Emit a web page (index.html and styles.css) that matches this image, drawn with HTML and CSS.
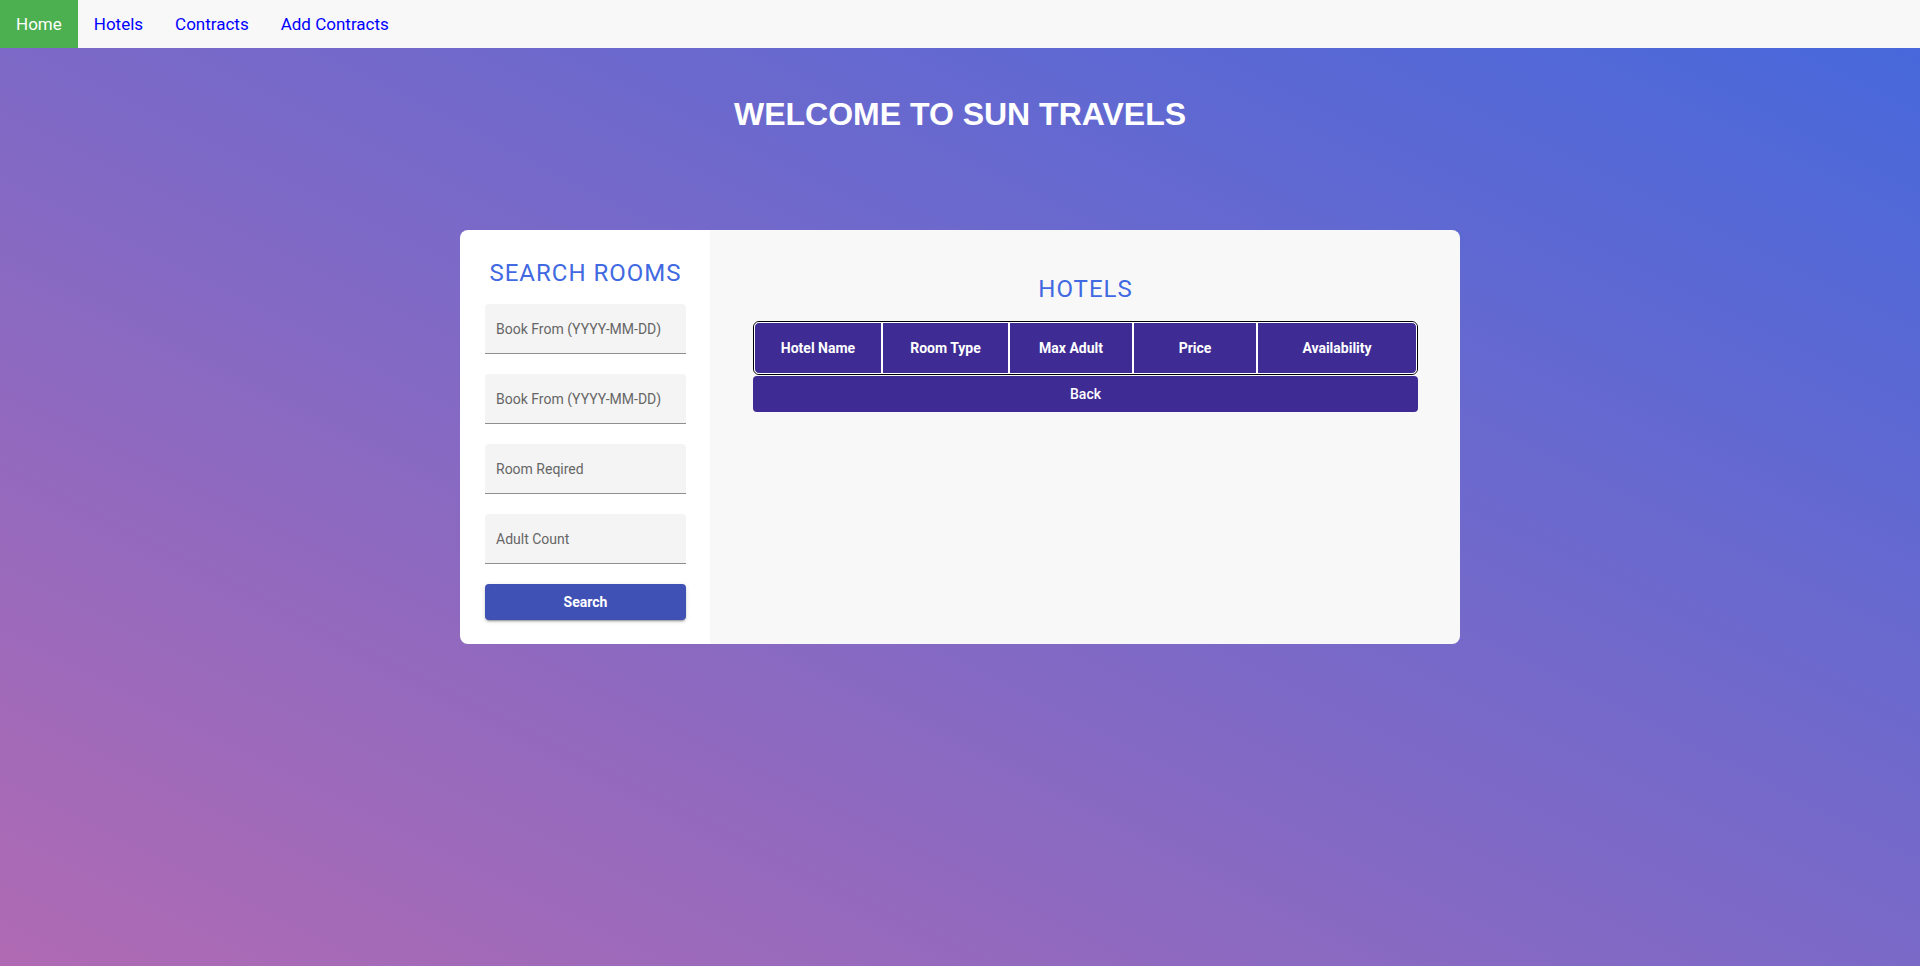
FILE: index.html
```html
<!DOCTYPE html>
<html lang="en">
<head>
<meta charset="utf-8">
<title>Sun Travels</title>
<link rel="stylesheet" href="styles.css">
</head>
<body>
<nav class="topnav">
  <a class="nav-link active" href="#">Home</a>
  <a class="nav-link" href="#">Hotels</a>
  <a class="nav-link" href="#">Contracts</a>
  <a class="nav-link" href="#">Add Contracts</a>
</nav>
<main class="page">
  <h1 class="welcome">WELCOME TO SUN TRAVELS</h1>
  <section class="card">
    <aside class="search-panel">
      <h2 class="panel-title">SEARCH ROOMS</h2>
      <div class="field"><input class="field-input" type="text" placeholder="Book From (YYYY-MM-DD)"></div>
      <div class="field"><input class="field-input" type="text" placeholder="Book From (YYYY-MM-DD)"></div>
      <div class="field"><input class="field-input" type="text" placeholder="Room Reqired"></div>
      <div class="field"><input class="field-input" type="text" placeholder="Adult Count"></div>
      <button class="search-btn" type="button">Search</button>
    </aside>
    <div class="results-panel">
      <h2 class="panel-title">HOTELS</h2>
      <table class="hotel-table">
        <thead>
          <tr>
            <th class="col-name">Hotel Name</th>
            <th class="col-type">Room Type</th>
            <th class="col-adult">Max Adult</th>
            <th class="col-price">Price</th>
            <th class="col-avail">Availability</th>
          </tr>
        </thead>
      </table>
      <button class="back-btn" type="button">Back</button>
    </div>
  </section>
</main>
</body>
</html>
```

FILE: styles.css
```css
html, body {
  margin: 0;
  padding: 0;
}

body {
  font-family: Roboto, "Liberation Sans", Arial, sans-serif;
  min-height: 966px;
  background: linear-gradient(to top right, #b06ab3, #4568dc);
}

.topnav {
  display: flex;
  height: 48px;
  background: #f8f8f8;
}

.nav-link {
  display: block;
  padding: 0 16px;
  line-height: 48px;
  font-size: 17px;
  color: #0000ff;
  text-decoration: none;
}

.nav-link.active {
  background: #4caf50;
  color: #ffffff;
}

.page {
  padding-bottom: 40px;
}

.welcome {
  margin: 48px 0 97px;
  line-height: 37px;
  font-family: "Liberation Sans", Arial, sans-serif;
  font-size: 32px;
  font-weight: 700;
  color: #ffffff;
  text-align: center;
}

.card {
  display: flex;
  width: 1000px;
  margin: 0 auto;
  border-radius: 8px;
  overflow: hidden;
}

.search-panel {
  width: 250px;
  box-sizing: border-box;
  padding: 29px 24px 24px 25px;
  background: #ffffff;
  display: flex;
  flex-direction: column;
}

.panel-title {
  margin: 0 0 17px;
  font-size: 24px;
  line-height: 28px;
  font-weight: 400;
  letter-spacing: 1px;
  color: #4169e1;
  text-align: center;
}

.field {
  height: 50px;
  margin-bottom: 20px;
}

.field-input {
  display: block;
  width: 100%;
  height: 50px;
  box-sizing: border-box;
  margin: 0;
  padding: 0 11px;
  border: none;
  border-bottom: 1px solid #8f8f8f;
  border-radius: 4px 4px 0 0;
  background: #f4f4f4;
  font-family: Roboto, "Liberation Sans", Arial, sans-serif;
  font-size: 14px;
  color: #333;
  outline: none;
}

.field-input::placeholder {
  color: #666666;
  opacity: 1;
}

.search-btn {
  height: 36px;
  border: none;
  border-radius: 4px;
  background: #3f51b5;
  color: #ffffff;
  font-family: Roboto, "Liberation Sans", Arial, sans-serif;
  font-size: 14px;
  font-weight: 700;
  box-shadow: 0 3px 1px -2px rgba(0,0,0,.2), 0 2px 2px 0 rgba(0,0,0,.14), 0 1px 5px 0 rgba(0,0,0,.12);
  cursor: pointer;
}

.results-panel {
  flex: 1;
  box-sizing: border-box;
  padding: 45px 42px 0 43px;
  background: #f8f8f8;
}

.results-panel .panel-title {
  margin-bottom: 18px;
}

.hotel-table {
  width: 100%;
  table-layout: fixed;
  border-collapse: separate;
  border-spacing: 0;
  border: 1px solid #000000;
  border-radius: 6px;
  background: #ffffff;
}

.hotel-table th {
  height: 52px;
  box-sizing: border-box;
  padding: 0 6px;
  border: 1px solid #ffffff;
  background: #3e2b94;
  color: #ffffff;
  font-size: 14px;
  font-weight: 700;
  text-align: center;
  vertical-align: middle;
}

.hotel-table .col-name { width: 128px; border-radius: 5px 0 0 5px; }
.hotel-table .col-type { width: 127px; }
.hotel-table .col-adult { width: 124px; }
.hotel-table .col-price { width: 124px; }
.hotel-table .col-avail { border-radius: 0 5px 5px 0; }

.back-btn {
  display: block;
  width: 100%;
  height: 36px;
  margin-top: 1px;
  border: none;
  border-radius: 4px;
  background: #3e2b94;
  color: #ffffff;
  font-family: Roboto, "Liberation Sans", Arial, sans-serif;
  font-size: 14px;
  font-weight: 500;
  cursor: pointer;
}
```
